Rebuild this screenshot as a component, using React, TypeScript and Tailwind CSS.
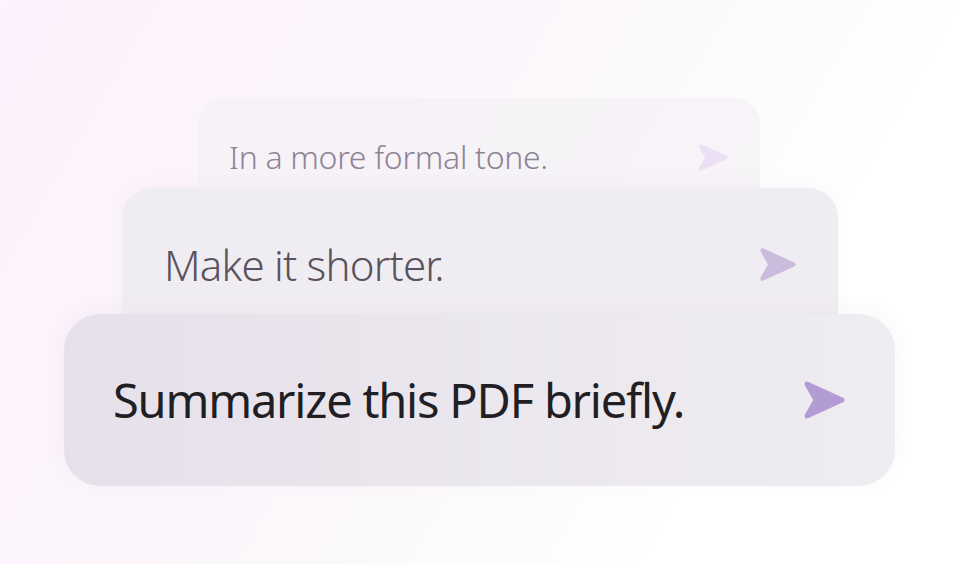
import React from "react";

function SendIcon({ className }: { className?: string }) {
  return (
    <svg viewBox="0 0 42 40" className={className} fill="currentColor" stroke="currentColor" strokeWidth="5" strokeLinejoin="round">
      <polygon points="4,4 39,20 4,36 13,20" />
    </svg>
  );
}

export default function App() {
  return (
    <div
      className="relative h-[564px] w-[960px] overflow-hidden bg-[linear-gradient(120deg,#fdf2fd_0%,#fcf4fc_25%,#fbf8fb_50%,#ffffff_75%)]"
      style={{ fontFamily: '"Noto Sans", "Open Sans", sans-serif' }}
    >
      <div className="flex flex-col pt-[98px]">
        <div className="ml-[198px] w-[562px] rounded-[26px] bg-[#f5f1f6]/80">
          <div className="flex h-[118px] items-center justify-between pl-[31px] pr-[32px]">
            <span className="text-[32px] font-light tracking-[-0.3px] text-[#8d8496]">In a more formal tone.</span>
            <SendIcon className="h-[29px] w-[30px] text-[#ebdff3]" />
          </div>
        </div>
        <div className="relative -mt-[28px] ml-[122px] w-[716px] rounded-[30px] bg-[#f0edf2] shadow-[0_-4px_16px_rgba(120,100,140,0.04)]">
          <div className="flex h-[152px] items-center justify-between pl-[42px] pr-[42px]">
            <span className="text-[42px] font-light tracking-[-0.8px] text-[#58535d]">Make it shorter.</span>
            <SendIcon className="h-[37px] w-[37px] text-[#cbbbdd]" />
          </div>
        </div>
        <div className="relative -mt-[26px] ml-[64px] w-[831px] rounded-[36px] bg-[linear-gradient(90deg,#e6e0ea_0%,#ebe7ee_50%,#efedf1_100%)] shadow-[0_-4px_20px_rgba(120,100,140,0.05)]">
          <div className="flex h-[172px] items-center justify-between pl-[49px] pr-[50px]">
            <span className="text-[47px] tracking-[-1.2px] text-[#211f24]">Summarize this PDF briefly.</span>
            <SendIcon className="h-[40px] w-[42px] text-[#b39bd3]" />
          </div>
        </div>
      </div>
    </div>
  );
}
